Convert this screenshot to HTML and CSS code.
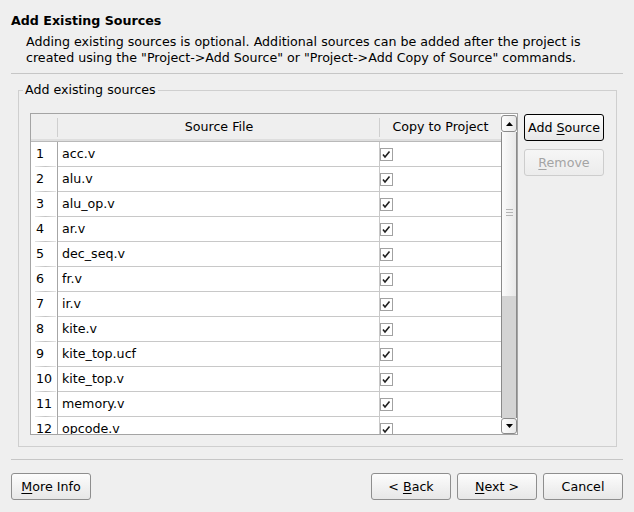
FILE: index.html
```html
<!DOCTYPE html>
<html>
<head>
<meta charset="utf-8">
<link rel="stylesheet" href="styles.css">
</head>
<body>
<div class="dialog">
  <div class="header">
    <div class="title">Add Existing Sources</div>
    <div class="desc">Adding existing sources is optional. Additional sources can be added after the project is<br>created using the "Project-&gt;Add Source" or "Project-&gt;Add Copy of Source" commands.</div>
  </div>
  <div class="sep sep-top"></div>
  <fieldset class="group">
    <legend>Add existing sources</legend>
    <div class="group-body">
      <div class="table">
        <div class="grid">
          <div class="thead">
            <div class="th th-num"></div>
            <div class="th th-file">Source File</div>
            <div class="th th-copy">Copy to Project</div>
          </div>
          <div class="tbody">
            <div class="row"><div class="c-num">1</div><div class="c-file">acc.v</div><div class="c-copy"><svg class="chk" width="13" height="13" viewBox="0 0 13 13"><rect x="0.5" y="0.5" width="12" height="12" fill="#fff" stroke="#a2a2a2"/><polyline points="3,6.5 5,9 9.5,3.5" fill="none" stroke="#202020" stroke-width="1.6"/></svg></div></div>
            <div class="row"><div class="c-num">2</div><div class="c-file">alu.v</div><div class="c-copy"><svg class="chk" width="13" height="13" viewBox="0 0 13 13"><rect x="0.5" y="0.5" width="12" height="12" fill="#fff" stroke="#a2a2a2"/><polyline points="3,6.5 5,9 9.5,3.5" fill="none" stroke="#202020" stroke-width="1.6"/></svg></div></div>
            <div class="row"><div class="c-num">3</div><div class="c-file">alu_op.v</div><div class="c-copy"><svg class="chk" width="13" height="13" viewBox="0 0 13 13"><rect x="0.5" y="0.5" width="12" height="12" fill="#fff" stroke="#a2a2a2"/><polyline points="3,6.5 5,9 9.5,3.5" fill="none" stroke="#202020" stroke-width="1.6"/></svg></div></div>
            <div class="row"><div class="c-num">4</div><div class="c-file">ar.v</div><div class="c-copy"><svg class="chk" width="13" height="13" viewBox="0 0 13 13"><rect x="0.5" y="0.5" width="12" height="12" fill="#fff" stroke="#a2a2a2"/><polyline points="3,6.5 5,9 9.5,3.5" fill="none" stroke="#202020" stroke-width="1.6"/></svg></div></div>
            <div class="row"><div class="c-num">5</div><div class="c-file">dec_seq.v</div><div class="c-copy"><svg class="chk" width="13" height="13" viewBox="0 0 13 13"><rect x="0.5" y="0.5" width="12" height="12" fill="#fff" stroke="#a2a2a2"/><polyline points="3,6.5 5,9 9.5,3.5" fill="none" stroke="#202020" stroke-width="1.6"/></svg></div></div>
            <div class="row"><div class="c-num">6</div><div class="c-file">fr.v</div><div class="c-copy"><svg class="chk" width="13" height="13" viewBox="0 0 13 13"><rect x="0.5" y="0.5" width="12" height="12" fill="#fff" stroke="#a2a2a2"/><polyline points="3,6.5 5,9 9.5,3.5" fill="none" stroke="#202020" stroke-width="1.6"/></svg></div></div>
            <div class="row"><div class="c-num">7</div><div class="c-file">ir.v</div><div class="c-copy"><svg class="chk" width="13" height="13" viewBox="0 0 13 13"><rect x="0.5" y="0.5" width="12" height="12" fill="#fff" stroke="#a2a2a2"/><polyline points="3,6.5 5,9 9.5,3.5" fill="none" stroke="#202020" stroke-width="1.6"/></svg></div></div>
            <div class="row"><div class="c-num">8</div><div class="c-file">kite.v</div><div class="c-copy"><svg class="chk" width="13" height="13" viewBox="0 0 13 13"><rect x="0.5" y="0.5" width="12" height="12" fill="#fff" stroke="#a2a2a2"/><polyline points="3,6.5 5,9 9.5,3.5" fill="none" stroke="#202020" stroke-width="1.6"/></svg></div></div>
            <div class="row"><div class="c-num">9</div><div class="c-file">kite_top.ucf</div><div class="c-copy"><svg class="chk" width="13" height="13" viewBox="0 0 13 13"><rect x="0.5" y="0.5" width="12" height="12" fill="#fff" stroke="#a2a2a2"/><polyline points="3,6.5 5,9 9.5,3.5" fill="none" stroke="#202020" stroke-width="1.6"/></svg></div></div>
            <div class="row"><div class="c-num">10</div><div class="c-file">kite_top.v</div><div class="c-copy"><svg class="chk" width="13" height="13" viewBox="0 0 13 13"><rect x="0.5" y="0.5" width="12" height="12" fill="#fff" stroke="#a2a2a2"/><polyline points="3,6.5 5,9 9.5,3.5" fill="none" stroke="#202020" stroke-width="1.6"/></svg></div></div>
            <div class="row"><div class="c-num">11</div><div class="c-file">memory.v</div><div class="c-copy"><svg class="chk" width="13" height="13" viewBox="0 0 13 13"><rect x="0.5" y="0.5" width="12" height="12" fill="#fff" stroke="#a2a2a2"/><polyline points="3,6.5 5,9 9.5,3.5" fill="none" stroke="#202020" stroke-width="1.6"/></svg></div></div>
            <div class="row"><div class="c-num">12</div><div class="c-file">opcode.v</div><div class="c-copy"><svg class="chk" width="13" height="13" viewBox="0 0 13 13"><rect x="0.5" y="0.5" width="12" height="12" fill="#fff" stroke="#a2a2a2"/><polyline points="3,6.5 5,9 9.5,3.5" fill="none" stroke="#202020" stroke-width="1.6"/></svg></div></div>
          </div>
        </div>
        <div class="scrollbar">
          <div class="sb-btn sb-up"><svg width="7" height="4" viewBox="0 0 7 4"><polygon points="0,4 7,4 3.5,0" fill="#000"/></svg></div>
          <div class="sb-thumb"><div class="grip"></div></div>
          <div class="sb-trough"></div>
          <div class="sb-btn sb-down"><svg width="7" height="4" viewBox="0 0 7 4"><polygon points="0,0 7,0 3.5,4" fill="#000"/></svg></div>
        </div>
      </div>
      <div class="side">
        <button class="btn btn-default">Add <u>S</u>ource</button>
        <button class="btn btn-disabled"><u>R</u>emove</button>
      </div>
    </div>
  </fieldset>
  <div class="sep sep-bottom"></div>
  <div class="footer">
    <button class="btn"><u>M</u>ore Info</button>
    <div class="spacer"></div>
    <button class="btn">&lt; <u>B</u>ack</button>
    <button class="btn"><u>N</u>ext &gt;</button>
    <button class="btn">Cancel</button>
  </div>
</div>
</body>
</html>
```

FILE: styles.css
```css
* { box-sizing: border-box; }

body {
  margin: 0;
  width: 634px;
  height: 512px;
  overflow: hidden;
  background: #efefef;
  font-family: "DejaVu Sans", "Bitstream Vera Sans", sans-serif;
  font-size: 12.65px;
  line-height: 16px;
  color: #000;
}

.dialog {
  display: flex;
  flex-direction: column;
  height: 512px;
}

.header {
  padding: 13px 11px 0 11px;
}

.title {
  font-weight: bold;
}

.desc {
  margin-top: 5px;
  padding-left: 15px;
  white-space: nowrap;
}

.sep {
  height: 1px;
  background: #c6c6c6;
  margin: 0 11px;
  flex: none;
}

.sep-top { margin-top: 7px; }
.sep-bottom { margin-top: 12px; }

.group {
  margin: 8px 17px 0 18px;
  padding: 15px 12px 11px 11px;
  border: 1px solid #cfcfcf;
  min-width: 0;
}

.group legend {
  padding: 0 2px;
  margin-left: -7px;
  line-height: 16px;
}

.group-body {
  display: flex;
  align-items: flex-start;
}

.table {
  display: flex;
  width: 488px;
  height: 322px;
  border: 1px solid #a4a4a4;
  background: #fff;
  flex: none;
}

.grid {
  width: 470px;
  height: 320px;
  display: flex;
  flex-direction: column;
  overflow: hidden;
}

.thead {
  display: flex;
  height: 28px;
  flex: none;
  background: #efefef;
  border-bottom: 1px solid #b9b9b9;
  box-shadow: inset 0 -2px 0 #dedede;
}

.th {
  text-align: center;
  line-height: 26px;
  background-image: linear-gradient(#cfcfcf, #cfcfcf);
  background-repeat: no-repeat;
  background-size: 1px 19px;
  background-position: right 4px;
}

.th-num { width: 27px; }
.th-file { width: 322px; }
.th-copy { width: 121px; background-image: none; }

.tbody {
  display: flex;
  flex-direction: column;
}

.row {
  display: flex;
  height: 25px;
  flex: none;
}

.c-num {
  width: 27px;
  padding-left: 5px;
  line-height: 24px;
  border-right: 1px solid #a6a6a6;
  background-image: linear-gradient(to right, #e4e4e4, #c4c4c4 50%, #e4e4e4);
  background-repeat: no-repeat;
  background-size: 21px 1px;
  background-position: 4px 100%;
}

.c-file {
  width: 322px;
  padding-left: 4px;
  line-height: 24px;
  border-right: 1px solid #c8c8c8;
  border-bottom: 1px solid #c8c8c8;
}

.c-copy {
  width: 121px;
  padding-top: 6px;
  border-bottom: 1px solid #c8c8c8;
}

.chk {
  display: block;
}

.scrollbar {
  width: 16px;
  height: 320px;
  display: flex;
  flex-direction: column;
  padding-top: 1px;
  background: #fff;
}

.sb-btn {
  display: flex;
  align-items: center;
  justify-content: center;
  border: 1px solid #8a8a8a;
  border-radius: 3px;
  background: linear-gradient(to right, #fdfdfd, #e9e9e9);
  flex: none;
}

.sb-up { height: 17px; }
.sb-down { height: 16px; }

.sb-thumb {
  height: 164px;
  flex: none;
  display: flex;
  align-items: center;
  justify-content: center;
  border-left: 1px solid #8a8a8a;
  border-right: 1px solid #8a8a8a;
  background: linear-gradient(to right, #fbfbfb, #e8e8e8);
}

.grip {
  width: 7px;
  height: 7px;
  margin-top: -3px;
  background-image:
    linear-gradient(#b4b4b4, #b4b4b4),
    linear-gradient(#b4b4b4, #b4b4b4),
    linear-gradient(#b4b4b4, #b4b4b4);
  background-repeat: no-repeat;
  background-size: 7px 1px;
  background-position: 0 0, 0 3px, 0 6px;
}

.sb-trough {
  height: 122px;
  flex: none;
  background: #d4d4d4;
  border-left: 1px solid #8a8a8a;
  border-right: 1px solid #8a8a8a;
}

.side {
  display: flex;
  flex-direction: column;
  gap: 8px;
  margin-left: 6px;
  margin-top: 1px;
}

.btn {
  width: 80px;
  height: 27px;
  padding: 0;
  margin: 0;
  border: 1px solid #8e8e8e;
  border-radius: 3px;
  background: linear-gradient(#fcfcfc, #e7e7e7);
  font-family: inherit;
  font-size: 12.65px;
  line-height: 25px;
  color: #000;
  text-align: center;
  flex: none;
}

.btn u {
  text-decoration-thickness: 1px;
  text-underline-offset: 2px;
}

.btn-default {
  border-color: #000;
}

.btn-disabled {
  border-color: #cdcdcd;
  background: linear-gradient(#f6f6f6, #ececec);
  color: #a4a4a4;
}

.footer {
  display: flex;
  gap: 6px;
  margin-top: 13px;
  padding: 0 11px;
}

.spacer {
  flex: 1;
}
```
